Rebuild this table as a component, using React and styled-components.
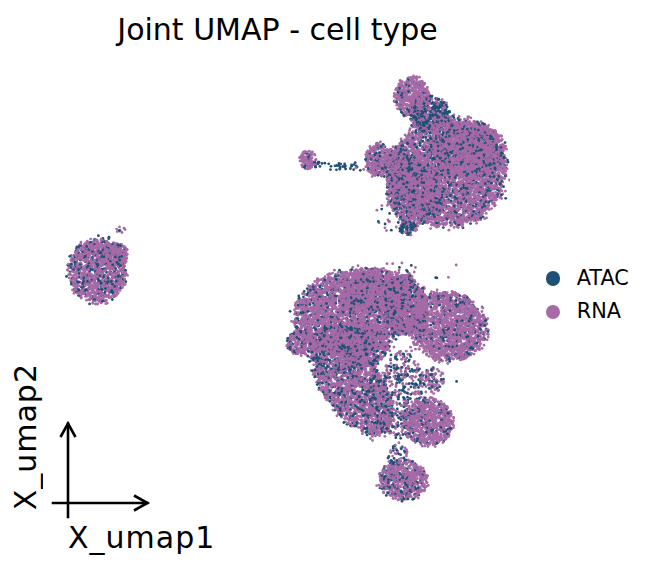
import React, { useMemo } from 'react';
import styled, { createGlobalStyle } from 'styled-components';

const ATAC = '#1f5175';
const RNA = '#a66aa7';

// cluster shapes in page pixels; d = points per px², atac = share of ATAC cells
const BLOBS = [
  // left island
  { x: 97, y: 271, rx: 29, ry: 32, atac: 0.25 },
  { x: 114, y: 254, rx: 14, ry: 12, atac: 0.2 },
  { x: 121, y: 231, rx: 5, ry: 5, d: 0.12, atac: 0.1 },

  // top-right group
  { x: 449, y: 172, rx: 56, ry: 54, atac: 0.22 },
  { x: 470, y: 150, rx: 34, ry: 28, atac: 0.15 },
  { x: 416, y: 192, rx: 28, ry: 32, atac: 0.25 },
  { x: 398, y: 168, rx: 14, ry: 22, atac: 0.25 },
  { x: 430, y: 114, rx: 20, ry: 17, atac: 0.55 },
  { x: 412, y: 97, rx: 18, ry: 20, atac: 0.12 },
  { x: 378, y: 160, rx: 13, ry: 17, atac: 0.2 },
  { x: 308, y: 160, rx: 9, ry: 9, atac: 0.15 },
  { x: 318, y: 165, rx: 5, ry: 3, d: 0.25, atac: 0.9 },
  { kind: 'line', x: 325, y: 166, x2: 366, y2: 168, rx: 2, ry: 2, n: 30, atac: 0.85 },
  { x: 408, y: 228, rx: 9, ry: 7, atac: 0.85 },
  { kind: 'gauss', x: 396, y: 208, rx: 10, ry: 12, n: 25, atac: 0.6 },
  { kind: 'gauss', x: 384, y: 224, rx: 4, ry: 4, n: 8, atac: 0.1 },

  // bottom group
  { x: 352, y: 312, rx: 58, ry: 42, rot: -12, atac: 0.2 },
  { x: 378, y: 290, rx: 35, ry: 21, atac: 0.2 },
  { x: 405, y: 305, rx: 22, ry: 30, atac: 0.2 },
  { x: 447, y: 326, rx: 40, ry: 34, rot: 15, atac: 0.15 },
  { x: 302, y: 343, rx: 15, ry: 12, atac: 0.25 },
  { x: 360, y: 345, rx: 28, ry: 22, atac: 0.25 },
  { x: 352, y: 385, rx: 58, ry: 29, rot: 55, atac: 0.25 },
  { x: 402, y: 395, rx: 22, ry: 45, d: 0.13, atac: 0.45 },
  { x: 432, y: 380, rx: 12, ry: 14, d: 0.18, atac: 0.3 },
  { x: 428, y: 422, rx: 25, ry: 24, atac: 0.12 },
  { x: 398, y: 455, rx: 11, ry: 11, d: 0.14, atac: 0.5 },
  { x: 403, y: 480, rx: 24, ry: 20, atac: 0.2 },
  { kind: 'gauss', x: 395, y: 375, rx: 25, ry: 40, n: 50, atac: 0.5 },
  { kind: 'gauss', x: 400, y: 272, rx: 18, ry: 5, n: 25, atac: 0.6 },
];

function mulberry32(seed) {
  let a = seed;
  return () => {
    a = (a + 0x6d2b79f5) | 0;
    let t = Math.imul(a ^ (a >>> 15), 1 | a);
    t = (t + Math.imul(t ^ (t >>> 7), 61 | t)) ^ t;
    return ((t ^ (t >>> 14)) >>> 0) / 4294967296;
  };
}

function makeCells() {
  const rand = mulberry32(9137);
  const gauss = () => Math.sqrt(-2 * Math.log(rand() || 1e-9)) * Math.cos(2 * Math.PI * rand());
  const cells = [];
  BLOBS.forEach((b) => {
    const n = b.n ?? Math.round((b.d ?? 0.45) * Math.PI * b.rx * b.ry);
    const rot = ((b.rot || 0) * Math.PI) / 180;
    for (let i = 0; i < n; i += 1) {
      let dx;
      let dy;
      let cx = b.x;
      let cy = b.y;
      if (b.kind === 'gauss') {
        dx = gauss() * b.rx;
        dy = gauss() * b.ry;
      } else if (b.kind === 'line') {
        const t = rand();
        cx = b.x + (b.x2 - b.x) * t;
        cy = b.y + (b.y2 - b.y) * t;
        dx = gauss() * b.rx;
        dy = gauss() * b.ry;
      } else {
        const r = Math.sqrt(rand()) + gauss() * 0.05;
        const a = rand() * Math.PI * 2;
        dx = Math.cos(a) * r * b.rx;
        dy = Math.sin(a) * r * b.ry;
      }
      cells.push({
        x: cx + dx * Math.cos(rot) - dy * Math.sin(rot),
        y: cy + dx * Math.sin(rot) + dy * Math.cos(rot),
        atac: rand() < b.atac,
      });
    }
  });
  for (let i = cells.length - 1; i > 0; i -= 1) {
    const j = Math.floor(rand() * (i + 1));
    [cells[i], cells[j]] = [cells[j], cells[i]];
  }
  return cells;
}

const GlobalStyle = createGlobalStyle`
  html, body {
    margin: 0;
    background: #ffffff;
  }
  body {
    font-family: "DejaVu Sans", "Liberation Sans", sans-serif;
    color: #000000;
  }
`;

const Figure = styled.div`
  width: 646px;
  height: 570px;
  display: grid;
  grid-template-columns: 45px 465px 1fr;
  grid-template-rows: 55px 465px auto;
  overflow: hidden;
`;

const Title = styled.div`
  grid-column: 2;
  grid-row: 1;
  font-size: 30px;
  line-height: 30px;
  padding-top: 15px;
  text-align: center;
  white-space: nowrap;
`;

const AxisLabel = styled.div`
  font-size: 30px;
  line-height: 30px;
  letter-spacing: 1px;
  white-space: nowrap;
`;

const YLabel = styled(AxisLabel)`
  grid-column: 1;
  grid-row: 2;
  writing-mode: vertical-rl;
  transform: rotate(180deg);
  align-self: end;
  justify-self: start;
  margin: 0 0 10px 11px;
`;

const XLabel = styled(AxisLabel)`
  grid-column: 2;
  grid-row: 3;
  margin: 3px 0 0 23px;
`;

const Plot = styled.svg`
  grid-column: 2;
  grid-row: 2;
  display: block;
  width: 465px;
  height: 465px;
`;

const Legend = styled.ul`
  grid-column: 3;
  grid-row: 2;
  list-style: none;
  margin: 0;
  padding: 213px 0 0 35.5px;
  display: flex;
  flex-direction: column;
  gap: 12.4px;
`;

const LegendItem = styled.li`
  display: flex;
  align-items: center;
  gap: 16.6px;
  font-size: 20.8px;
  line-height: 21px;
`;

const Swatch = styled.span`
  width: 14.6px;
  height: 14.6px;
  border-radius: 50%;
  background: ${(p) => p.$color};
  flex: none;
`;

const CATEGORIES = [
  { label: 'ATAC', color: ATAC },
  { label: 'RNA', color: RNA },
];

export default function App() {
  const cells = useMemo(makeCells, []);
  return (
    <>
      <GlobalStyle />
      <Figure>
        <Title>Joint UMAP - cell type</Title>
        <YLabel>X_umap2</YLabel>
        <Plot viewBox="45 55 465 465">
          {cells.map((c, i) => (
            <circle key={i} cx={c.x.toFixed(1)} cy={c.y.toFixed(1)} r="1.4" fill={c.atac ? ATAC : RNA} />
          ))}
          <g stroke="#000" strokeWidth="2.6" fill="none" strokeLinecap="square">
            <path d="M68 517 V424" />
            <path d="M60.5 437 L68 423.5 L75.5 437" strokeLinecap="butt" />
            <path d="M53 503 H147" />
            <path d="M134 495.5 L147.5 503 L134 510.5" strokeLinecap="butt" />
          </g>
        </Plot>
        <XLabel>X_umap1</XLabel>
        <Legend>
          {CATEGORIES.map((c) => (
            <LegendItem key={c.label}>
              <Swatch $color={c.color} />
              {c.label}
            </LegendItem>
          ))}
        </Legend>
      </Figure>
    </>
  );
}
